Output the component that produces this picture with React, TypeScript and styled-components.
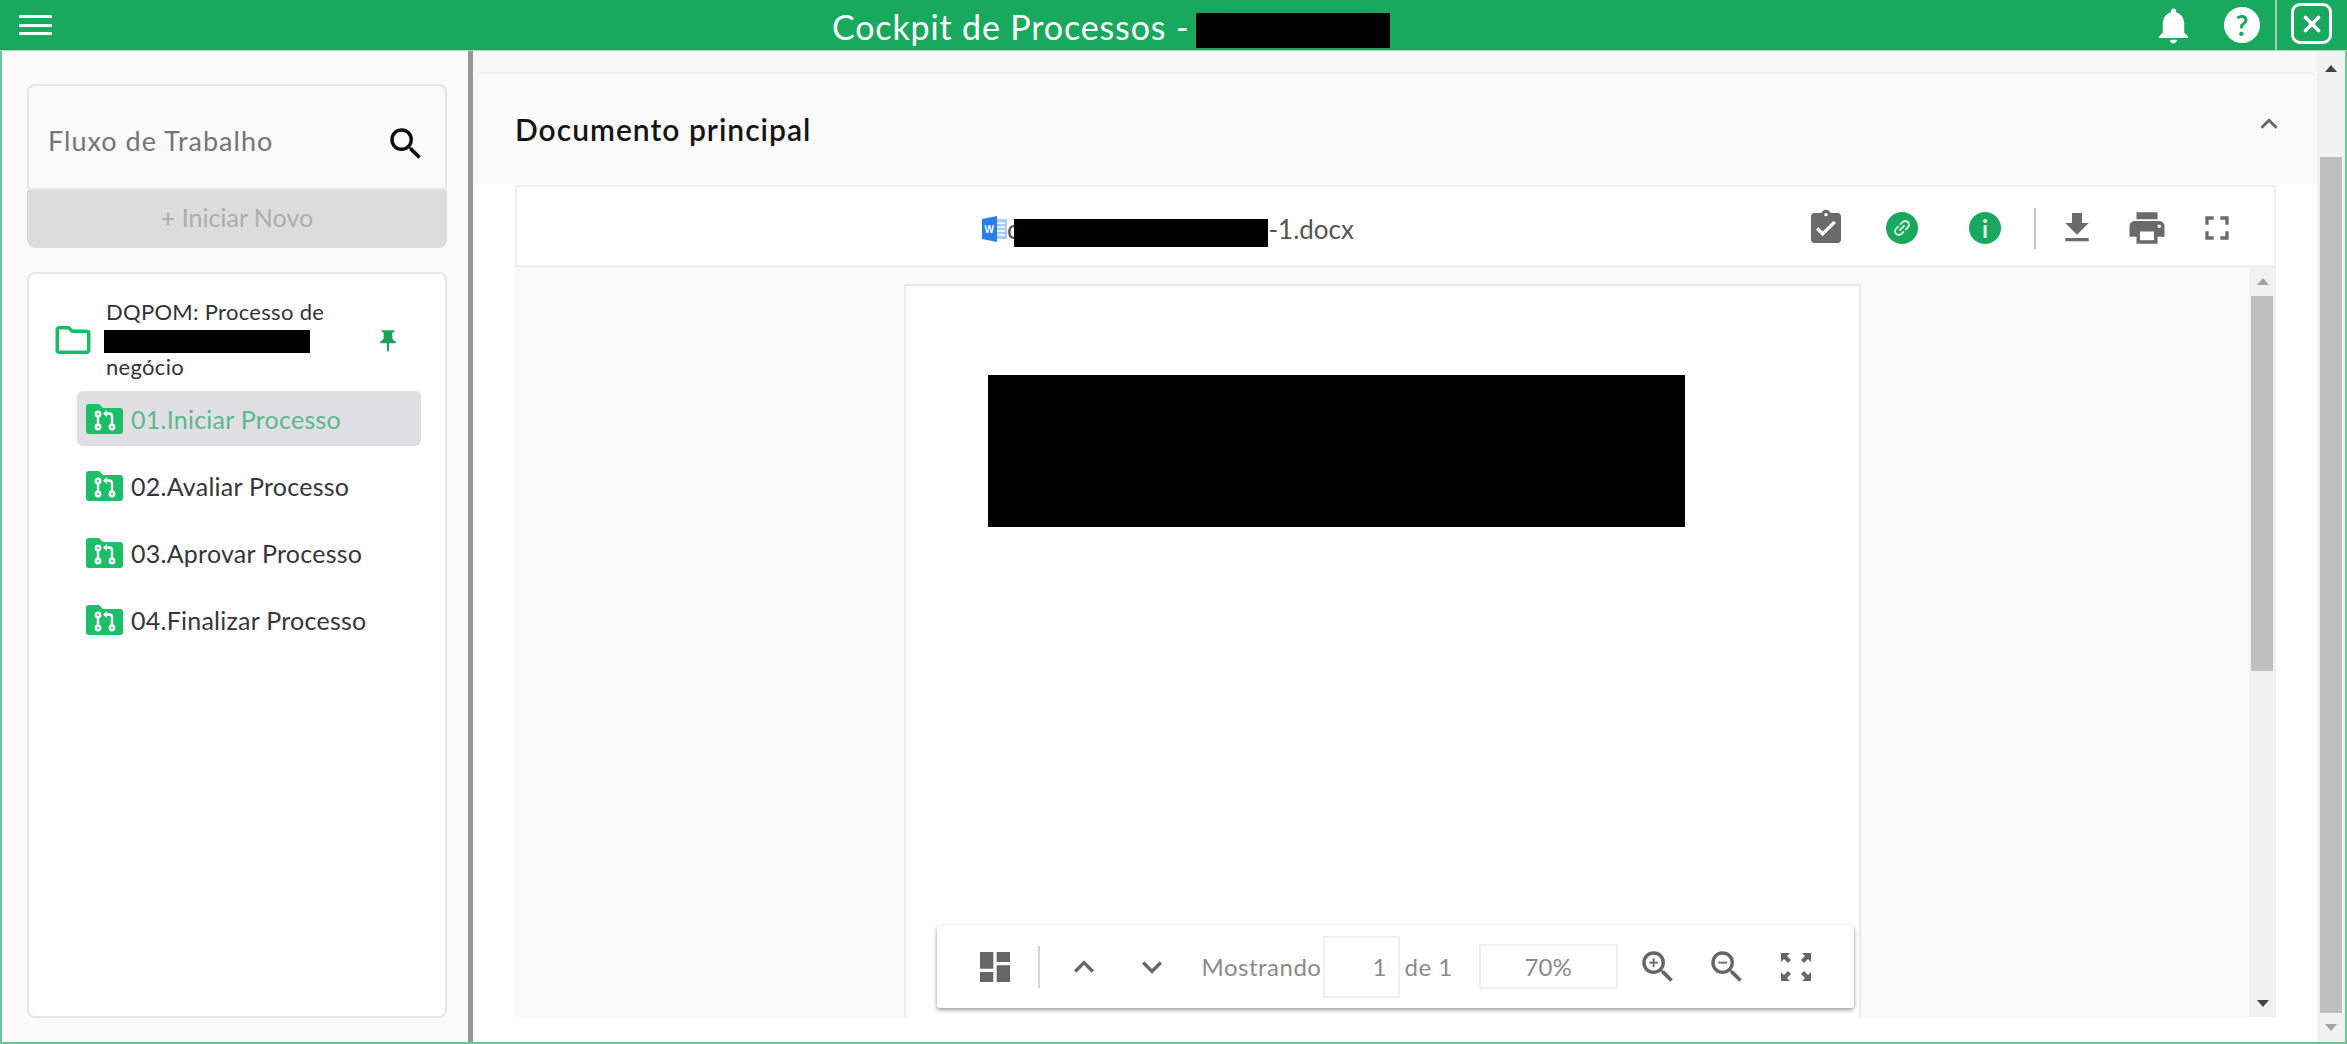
import { ReactElement } from 'react'
import styled, { createGlobalStyle } from 'styled-components'
import {
  MdAssignmentTurnedIn,
  MdDashboard,
  MdFileDownload,
  MdFullscreen,
  MdKeyboardArrowDown,
  MdKeyboardArrowUp,
  MdLink,
  MdNotifications,
  MdOutlineFolder,
  MdOutlineZoomIn,
  MdOutlineZoomOut,
  MdPrint,
  MdPushPin,
  MdSearch,
} from 'react-icons/md'

const GREEN = '#18a95e'
const FONT = `Lato, "Open Sans", "Liberation Sans", sans-serif`

const GlobalStyle = createGlobalStyle`
  html, body {
    margin: 0;
    padding: 0;
    height: 100%;
    overflow: hidden;
    background: #fff;
    font-family: ${FONT};
  }
  #root { height: 100%; }
  * { box-sizing: border-box; }
`

const SWindow = styled.div`
  width: 2347px;
  height: 1044px;
  display: flex;
  flex-direction: column;
  border: 2px solid #6cc596;
  border-top: 0;
`

const STopBar = styled.header`
  height: 51px;
  margin: 0 -2px;
  flex: none;
  display: flex;
  align-items: center;
  background: ${GREEN};
  border-bottom: 1px solid #b9cfc2;
  color: #fff;
`

const SMenuButton = styled.div`
  width: 33px;
  height: 20px;
  margin-left: 19px;
  display: flex;
  flex-direction: column;
  justify-content: space-between;
  & > span {
    height: 3px;
    background: #fff;
    border-radius: 1px;
  }
`

const STitle = styled.div`
  position: absolute;
  left: 832px;
  top: 0;
  height: 52px;
  display: flex;
  align-items: center;
  gap: 7px;
  font-size: 34px;
  letter-spacing: 0.85px;
`

const SRedact = styled.span<{ $w: number; $h: number }>`
  display: inline-block;
  flex: none;
  width: ${({ $w }) => $w}px;
  height: ${({ $h }) => $h}px;
  background: #000;
`

const STitleRedact = styled(SRedact)`
  margin-top: 9px;
`

const STopActions = styled.div`
  margin-left: auto;
  height: 100%;
  display: flex;
  align-items: center;
`

const SBell = styled(MdNotifications)`
  font-size: 43px;
  margin-right: 29px;
`

const SHelpDisc = styled.div`
  width: 36px;
  height: 36px;
  border-radius: 50%;
  background: #fff;
  color: ${GREEN};
  display: flex;
  align-items: center;
  justify-content: center;
  font-size: 28px;
  font-weight: 700;
  margin-right: 15px;
`

const SCloseCell = styled.div`
  height: 100%;
  border-left: 2px solid #a5c9b4;
  padding: 0 15px 3px 14px;
  display: flex;
  align-items: center;
`

const SCloseBox = styled.div`
  width: 41px;
  height: 41px;
  border: 3px solid #fff;
  border-radius: 9px;
  display: flex;
  align-items: center;
  justify-content: center;
`

const SBody = styled.div`
  flex: 1;
  min-height: 0;
  display: flex;
`

const SSidebar = styled.aside`
  width: 471px;
  flex: none;
  padding: 33px 21px 24px 25px;
  background: #fafafa;
  border-right: 5px solid #979797;
  display: flex;
  flex-direction: column;
`

const SSearchCard = styled.div`
  height: 106px;
  flex: none;
  padding: 6px 22px 0 19px;
  display: flex;
  align-items: center;
  justify-content: space-between;
  border: 2px solid #e6e6e6;
  border-radius: 8px 8px 4px 4px;
  font-size: 27px;
  letter-spacing: 1px;
  color: #757575;
`

const SSearchIcon = styled(MdSearch)`
  font-size: 42px;
  color: #0b0b0b;
  margin: 8px -4px 0 0;
`

const SStartButton = styled.div`
  height: 58px;
  flex: none;
  padding-bottom: 4px;
  display: flex;
  align-items: center;
  justify-content: center;
  background: #dcdcdc;
  border-radius: 0 0 8px 8px;
  font-size: 25px;
  color: #adadad;
`

const STreeCard = styled.div`
  flex: 1;
  margin-top: 24px;
  padding: 24px 24px 0 27px;
  background: #fff;
  border: 2px solid #e6e6e6;
  border-radius: 8px;
`

const STreeHead = styled.div`
  display: flex;
  align-items: center;
  margin-bottom: 10px;
`

const SFolderIcon = styled(MdOutlineFolder)`
  font-size: 42px;
  margin: 0 12px 0 -4px;
  color: #19bd66;
  flex: none;
`

const STreeTitle = styled.div`
  width: 269px;
  font-size: 22px;
  letter-spacing: 0.3px;
  line-height: 28px;
  color: #333;
  & > span {
    display: block;
    margin: 4px 0 0 -2px;
  }
`

const SPinIcon = styled(MdPushPin)`
  font-size: 26px;
  margin-top: 2px;
  color: #19a35c;
`

const STreeList = styled.div`
  margin-left: 21px;
  display: flex;
  flex-direction: column;
  gap: 12px;
`

const STreeRow = styled.div<{ $active?: boolean }>`
  height: 55px;
  padding-left: 9px;
  display: flex;
  align-items: center;
  gap: 8px;
  border-radius: 6px;
  font-size: 25px;
  letter-spacing: 0.25px;
  background: ${({ $active }) => ($active ? '#e0dfe3' : 'transparent')};
  color: ${({ $active }) => ($active ? '#5ab98a' : '#353540')};
`

const SMain = styled.main`
  flex: 1;
  min-width: 0;
  display: flex;
`

const SContent = styled.div`
  flex: 1;
  min-width: 0;
  display: flex;
  flex-direction: column;
  background: #fff;
`

const STopStrip = styled.div`
  height: 21px;
  flex: none;
  background: #f8f8f8;
`

const SAccordion = styled.div`
  height: 112px;
  flex: none;
  padding: 0 31px 0 42px;
  display: flex;
  align-items: center;
  justify-content: space-between;
  background: #fafafa;
  border-top: 2px solid #f2f2f2;
  border-radius: 6px 6px 0 0;
  font-size: 30px;
  letter-spacing: 1px;
  font-weight: 600;
  color: #141414;
  & > svg {
    font-size: 34px;
    color: #666;
    margin-top: -10px;
  }
`

const SViewerWrap = styled.div`
  flex: 1;
  min-height: 0;
  padding: 1px 41px 25px 42px;
  display: flex;
  flex-direction: column;
`

const SDocBar = styled.div`
  position: relative;
  height: 82px;
  flex: none;
  padding: 4px 37px 0 0;
  display: flex;
  align-items: center;
  justify-content: flex-end;
  border: 2px solid #efefef;
  color: #6a6a6a;
`

const SFileName = styled.div`
  position: absolute;
  left: 464px;
  top: 24px;
  display: flex;
  align-items: center;
  font-size: 26px;
  color: #555;
  & > svg { margin-right: -2px; }
`

const SFileRedact = styled(SRedact)`
  margin: 8px 0 0 -5px;
`

const SDocTool = styled.span<{ $size: number; $gap: number }>`
  display: inline-flex;
  font-size: ${({ $size }) => $size}px;
  margin-left: ${({ $gap }) => $gap}px;
  color: #6a6a6a;
`

const SRound = styled.span<{ $gap: number }>`
  width: 32px;
  height: 32px;
  margin-left: ${({ $gap }) => $gap}px;
  border-radius: 50%;
  background: ${GREEN};
  color: #dff3e8;
  display: inline-flex;
  align-items: center;
  justify-content: center;
  font-size: 24px;
  font-weight: 700;
  & > svg {
    font-size: 22px;
    transform: rotate(-45deg);
  }
`

const SDocDivider = styled.span`
  width: 2px;
  height: 41px;
  margin-left: 33px;
  background: #c4c4c4;
`

const SViewer = styled.div`
  flex: 1;
  min-height: 0;
  display: flex;
`

const SPages = styled.div`
  flex: 1;
  min-width: 0;
  padding-top: 17px;
  display: flex;
  justify-content: center;
  background: #fafafa;
`

const SPage = styled.div`
  position: relative;
  width: 957px;
  padding: 89px 0 0 82px;
  background: #fff;
  border: 2px solid #eaeaea;
  border-bottom: 0;
`

const SPdfBar = styled.div`
  position: absolute;
  left: 31px;
  right: 5px;
  bottom: 9px;
  height: 83px;
  display: flex;
  align-items: center;
  background: #fff;
  border-radius: 3px;
  box-shadow: 0 2px 4px rgba(0, 0, 0, 0.4);
  font-size: 24px;
  color: #8a8a8a;
`

const SPdfIcon = styled.span<{ $left: number; $size: number }>`
  display: inline-flex;
  flex: none;
  margin-left: ${({ $left }) => $left}px;
  font-size: ${({ $size }) => $size}px;
  color: #666;
`

const SPdfDivider = styled.span`
  width: 2px;
  height: 42px;
  margin-left: 23px;
  background: #d4d4d4;
`

const SPageInput = styled.div`
  width: 77px;
  height: 62px;
  flex: none;
  margin-left: 2px;
  padding-right: 12px;
  display: flex;
  align-items: center;
  justify-content: flex-end;
  border: 2px solid #f0f0f0;
`

const SZoomInput = styled.div`
  width: 139px;
  height: 45px;
  margin-left: 26px;
  flex: none;
  display: flex;
  align-items: center;
  justify-content: center;
  border: 2px solid #f0f0f0;
`

const SBarText = styled.span<{ $left: number }>`
  margin-left: ${({ $left }) => $left}px;
  flex: none;
  letter-spacing: 0.5px;
`

const SScrollbar = styled.div<{ $width: number }>`
  width: ${({ $width }) => $width}px;
  flex: none;
  display: flex;
  flex-direction: column;
  align-items: flex-end;
  background: #f1f1f1;
`

const SScrollArrow = styled.div<{ $up?: boolean; $height: number; $color: string }>`
  width: 100%;
  height: ${({ $height }) => $height}px;
  flex: none;
  display: flex;
  align-items: center;
  justify-content: center;
  &::before {
    content: '';
    border-left: 6px solid transparent;
    border-right: 6px solid transparent;
    ${({ $up, $color }) =>
      $up ? `border-bottom: 7px solid ${$color};` : `border-top: 7px solid ${$color};`}
  }
`

const SScrollThumb = styled.div<{ $top: number; $height: number }>`
  width: 22px;
  height: ${({ $height }) => $height}px;
  margin: ${({ $top }) => $top}px 3px 0 0;
  flex: none;
  background: #bfbfbf;
`

const SScrollSpacer = styled.div`
  flex: 1;
`

function CloseIcon(): ReactElement {
  return (
    <svg width="18" height="18" viewBox="0 0 18 18" stroke="#fff" strokeWidth="3.6" strokeLinecap="round">
      <path d="M2.5 2.5l13 13M15.5 2.5l-13 13" />
    </svg>
  )
}

function GitFolderIcon(): ReactElement {
  return (
    <svg width="37" height="30" viewBox="0 0 37 30" style={{ flex: 'none' }}>
      <path
        d="M0 3q0-3 3-3h10l4 4h17q3 0 3 3v20q0 3-3 3H3q-3 0-3-3z"
        fill="#1abf68"
      />
      <g fill="none" stroke="#fff" strokeWidth="2.4">
        <circle cx="12" cy="10" r="2.2" />
        <circle cx="12" cy="23" r="2.2" />
        <circle cx="26" cy="23" r="2.2" />
        <path d="M12 12.5v8M26 20.5v-8q0-3-3-3h-3" />
      </g>
      <path d="M21 6v7l-4-3.5z" fill="#fff" />
    </svg>
  )
}

function WordIcon(): ReactElement {
  return (
    <svg width="28" height="26" viewBox="0 0 28 26">
      <rect x="9" y="3" width="17" height="20" rx="1" fill="#a9c8fb" />
      <path d="M16 7h8M16 11h8M16 15h8M16 19h8" stroke="#fff" strokeWidth="1.5" />
      <path d="M1 3l15-3v26L1 23z" fill="#2b7cf0" />
      <text x="3.5" y="16.5" fontSize="10" fontWeight="700" fill="#fff" fontFamily="Liberation Sans">
        W
      </text>
    </svg>
  )
}

function FitIcon(): ReactElement {
  return (
    <svg width="34" height="32" viewBox="0 0 34 32" fill="#666">
      <path d="M2 2h9l-3 3 4 4-3 3-4-4-3 3zM32 2v9l-3-3-4 4-3-3 4-4-3-3zM2 30v-9l3 3 4-4 3 3-4 4 3 3zM32 30h-9l3-3-4-4 3-3 4 4 3-3z" />
    </svg>
  )
}

const TREE_ITEMS = ['01.Iniciar Processo', '02.Avaliar Processo', '03.Aprovar Processo', '04.Finalizar Processo']

function App(): ReactElement {
  return (
    <SWindow>
      <GlobalStyle />
      <STopBar>
        <SMenuButton>
          <span />
          <span />
          <span />
        </SMenuButton>
        <STitle>
          Cockpit de Processos -
          <STitleRedact $w={194} $h={35} />
        </STitle>
        <STopActions>
          <SBell />
          <SHelpDisc>?</SHelpDisc>
          <SCloseCell>
            <SCloseBox>
              <CloseIcon />
            </SCloseBox>
          </SCloseCell>
        </STopActions>
      </STopBar>
      <SBody>
        <SSidebar>
          <SSearchCard>
            Fluxo de Trabalho
            <SSearchIcon />
          </SSearchCard>
          <SStartButton>+ Iniciar Novo</SStartButton>
          <STreeCard>
            <STreeHead>
              <SFolderIcon />
              <STreeTitle>
                DQPOM: Processo de
                <SRedact $w={206} $h={23} />
                negócio
              </STreeTitle>
              <SPinIcon />
            </STreeHead>
            <STreeList>
              {TREE_ITEMS.map((item, index) => (
                <STreeRow key={item} $active={index === 0}>
                  <GitFolderIcon />
                  {item}
                </STreeRow>
              ))}
            </STreeList>
          </STreeCard>
        </SSidebar>
        <SMain>
          <SContent>
            <STopStrip />
            <SAccordion>
              Documento principal
              <MdKeyboardArrowUp />
            </SAccordion>
            <SViewerWrap>
              <SDocBar>
                <SFileName>
                  <WordIcon />
                  c
                  <SFileRedact $w={254} $h={28} />
                  -1.docx
                </SFileName>
                <SDocTool $size={40} $gap={0}>
                  <MdAssignmentTurnedIn />
                </SDocTool>
                <SRound $gap={40}>
                  <MdLink />
                </SRound>
                <SRound $gap={51}>i</SRound>
                <SDocDivider />
                <SDocTool $size={40} $gap={21}>
                  <MdFileDownload />
                </SDocTool>
                <SDocTool $size={42} $gap={29}>
                  <MdPrint />
                </SDocTool>
                <SDocTool $size={40} $gap={29}>
                  <MdFullscreen />
                </SDocTool>
              </SDocBar>
              <SViewer>
                <SPages>
                  <SPage>
                    <SRedact $w={697} $h={152} />
                    <SPdfBar>
                      <SPdfIcon $left={38} $size={40}>
                        <MdDashboard />
                      </SPdfIcon>
                      <SPdfDivider />
                      <SPdfIcon $left={24} $size={40}>
                        <MdKeyboardArrowUp />
                      </SPdfIcon>
                      <SPdfIcon $left={28} $size={40}>
                        <MdKeyboardArrowDown />
                      </SPdfIcon>
                      <SBarText $left={30}>Mostrando</SBarText>
                      <SPageInput>1</SPageInput>
                      <SBarText $left={4}>de 1</SBarText>
                      <SZoomInput>70%</SZoomInput>
                      <SPdfIcon $left={19} $size={42}>
                        <MdOutlineZoomIn />
                      </SPdfIcon>
                      <SPdfIcon $left={27} $size={42}>
                        <MdOutlineZoomOut />
                      </SPdfIcon>
                      <SPdfIcon $left={31} $size={34}>
                        <FitIcon />
                      </SPdfIcon>
                    </SPdfBar>
                  </SPage>
                </SPages>
                <SScrollbar $width={27}>
                  <SScrollArrow $up $height={29} $color="#a3a3a3" />
                  <SScrollThumb $top={0} $height={375} />
                  <SScrollSpacer />
                  <SScrollArrow $height={28} $color="#444" />
                </SScrollbar>
              </SViewer>
            </SViewerWrap>
          </SContent>
          <SScrollbar $width={28}>
            <SScrollArrow $up $height={34} $color="#444" />
            <SScrollThumb $top={72} $height={856} />
            <SScrollArrow $height={29} $color="#a3a3a3" />
          </SScrollbar>
        </SMain>
      </SBody>
    </SWindow>
  )
}

export default App
